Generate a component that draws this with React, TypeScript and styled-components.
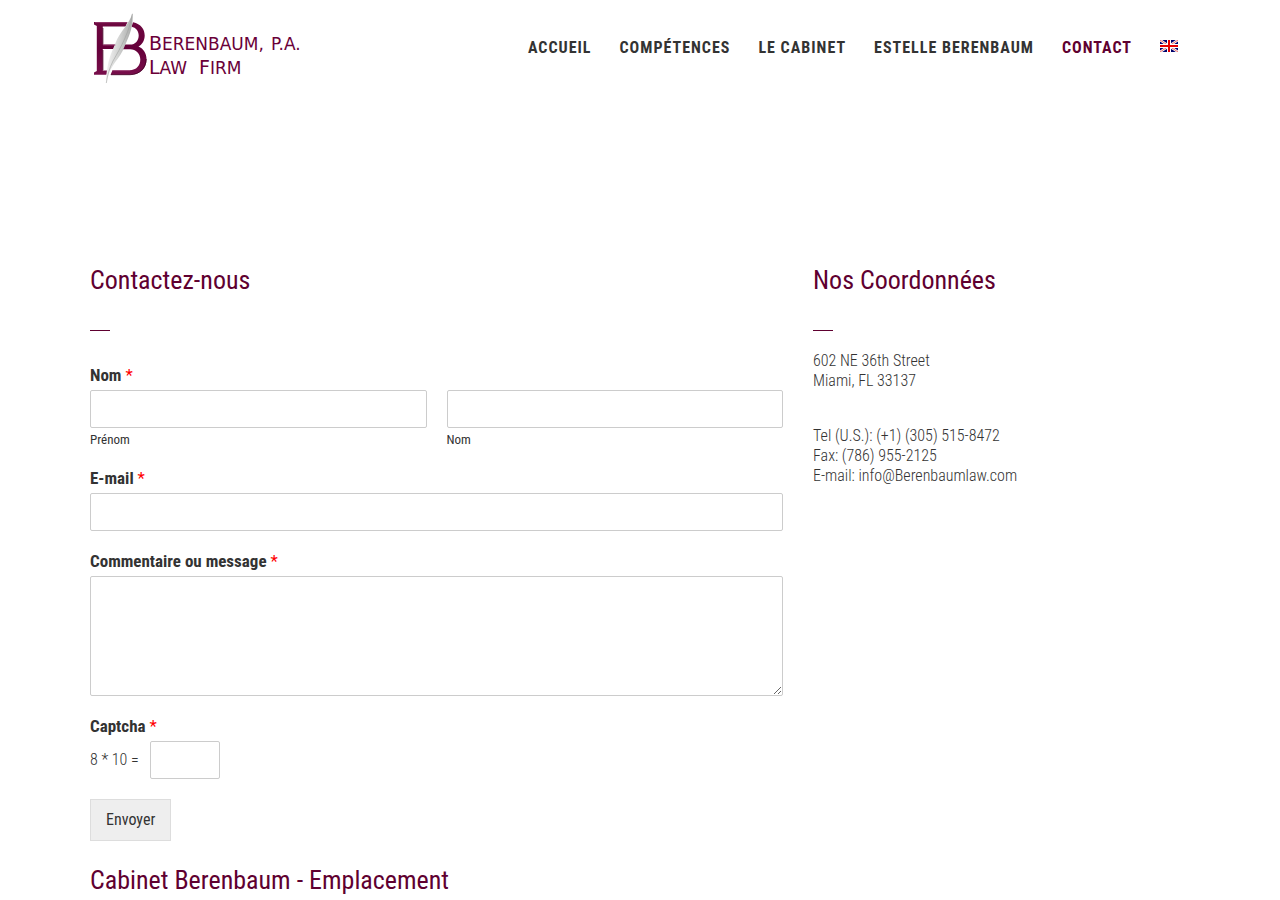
import React from "react";
import styled, { createGlobalStyle } from "styled-components";

const plum = "#5f0030";

const GlobalStyle = createGlobalStyle`
  *, *::before, *::after { box-sizing: border-box; }
  body {
    margin: 0;
    background: #fff;
    color: #333;
    font-family: "Roboto Condensed", Roboto, "Liberation Sans", sans-serif;
    font-size: 16px;
    line-height: 20px;
    font-weight: 300;
  }
`;

const Container = styled.div`
  max-width: 1140px;
  margin: 0 auto;
  padding: 0 20px;
`;

const Header = styled.header`
  display: flex;
  flex-wrap: wrap;
  align-items: center;
  justify-content: space-between;
  min-height: 95px;
  padding-right: 12px;
`;

const LogoLink = styled.a`
  display: block;
  line-height: 0;
`;

const Wordmark = styled.g`
  fill: #6a0038;
  font-family: "DejaVu Sans", sans-serif;
  font-size: 17px;
  font-weight: 400;
`;

const BigCap = styled.tspan`
  font-size: 19px;
`;

const Nav = styled.nav`
  display: flex;
  flex-wrap: wrap;
  align-items: center;
  gap: 8px 28px;
`;

const NavLink = styled.a<{ $active?: boolean }>`
  color: ${(p) => (p.$active ? plum : "#333")};
  font-size: 16px;
  font-weight: 700;
  letter-spacing: 1px;
  text-transform: uppercase;
  text-decoration: none;
`;

const FlagLink = styled.a`
  display: block;
  line-height: 0;
  padding-bottom: 3px;
`;

const Main = styled.main`
  padding: 170px 0 40px;
`;

const Columns = styled.div`
  display: grid;
  grid-template-columns: 693fr 377fr;
  gap: 30px;

  @media (max-width: 760px) {
    grid-template-columns: 1fr;
  }
`;

const Title = styled.h2`
  margin: 0;
  color: ${plum};
  font-size: 26px;
  line-height: 30px;
  font-weight: 400;
`;

const Rule = styled.hr`
  width: 20px;
  height: 1px;
  margin: 35px 0 0;
  border: 0;
  background: ${plum};
`;

const Form = styled.form`
  margin: 34px 0 24px;
`;

const Field = styled.div`
  margin-bottom: 20px;
`;

const Group = styled.fieldset`
  min-width: 0;
  margin: 0 0 20px;
  padding: 0;
  border: 0;
`;

const labelText = `
  display: block;
  margin-bottom: 5px;
  padding: 0;
  font-size: 17px;
  line-height: 20px;
  font-weight: 700;
`;

const Legend = styled.legend`${labelText}`;
const Label = styled.label`${labelText}`;

const Required = styled.span`
  color: #f00;
  font-weight: 400;
`;

const NameRow = styled.div`
  display: grid;
  grid-template-columns: 1fr 1fr;
  gap: 20px;
`;

const Input = styled.input`
  display: block;
  width: 100%;
  height: 38px;
  padding: 6px 10px;
  border: 1px solid #ccc;
  border-radius: 2px;
  background: #fff;
  color: #333;
  font: inherit;
`;

const CaptchaInput = styled(Input)`
  width: 70px;
`;

const TextArea = styled.textarea`
  display: block;
  width: 100%;
  height: 120px;
  padding: 6px 10px;
  border: 1px solid #ccc;
  border-radius: 2px;
  color: #333;
  font: inherit;
  resize: vertical;
`;

const SubLabel = styled.label`
  display: block;
  margin-top: 4px;
  font-size: 13px;
  line-height: 16px;
  font-weight: 400;
`;

const CaptchaRow = styled.div`
  display: flex;
  align-items: center;
  gap: 11px;
`;

const Submit = styled.button`
  display: block;
  padding: 10px 15px;
  border: 1px solid #ddd;
  background: #eee;
  color: #333;
  font: inherit;
  font-weight: 400;
  cursor: pointer;
`;

const Address = styled.address`
  margin-top: 20px;
  font-style: normal;
`;

const Lines = styled.p`
  margin: 0 0 35px;
`;

function Logo() {
  return (
    <svg width="212" height="80" viewBox="90 8 212 80" role="img" aria-label="Berenbaum, P.A. Law Firm">
      <defs>
        <linearGradient id="feather" x1="0" y1="0" x2="1" y2="0.3">
          <stop offset="0.2" stopColor="#f4f4f4" />
          <stop offset="0.6" stopColor="#cfd0cf" />
          <stop offset="1" stopColor="#a5a6a5" />
        </linearGradient>
        <linearGradient id="bevel" gradientUnits="userSpaceOnUse" x1="0" y1="22" x2="0" y2="75">
          <stop offset="0" stopColor="#6e0840" />
          <stop offset="0.5" stopColor="#65003a" />
          <stop offset="1" stopColor="#780e4b" />
        </linearGradient>
      </defs>
      <g fill="url(#bevel)">
        <path d="M94 22H127.500L125.500 26.500H102.800V44.500H116L113.500 49H102.800V70.500H108L106.500 74.800H94V72.500L96.800 71V26L94 24.500Z" />
        <path d="M133 22.200C141 24 144.700 29 144.700 35.500C144.700 40.500 142 44.500 138.500 46.500C143.500 48.500 146.500 53.500 146.500 59C146.500 68.500 140 74.800 130 74.800H110.500L112.500 70.200H129.500C136.500 70.200 140.300 65.500 140.300 59.500C140.300 53.500 136 49.200 130 49.200H122L124.500 44.600H130C135.500 44.600 138.700 40.500 138.700 35.500C138.700 31 136 27.500 131.500 26.700Z" />
      </g>
      <path d="M132.500 13C129.500 24 119.500 32 115.500 43C112.500 51 106.500 60 106 84C108 72 113 65 117.500 59C122 53 124 48 126 43C130 34 133.500 25 132.500 13Z" fill="url(#feather)" />
      <path d="M132.300 14C129.500 32 121 47 113 61C109.500 68 107.500 75 106.300 83" fill="none" stroke="#a0a1a0" strokeWidth="0.600" />
      <path d="M102.900 28V44.500M102.900 50V70M111 74.700H130C140 74.500 146 68 146.200 59" fill="none" stroke="#3f0022" strokeWidth="0.800" />
      <path d="M95 22.600H127M103 45H115.500M112.500 70.700H130" fill="none" stroke="#a04a7c" strokeWidth="0.700" />
      <Wordmark>
        <text x="149" y="50"><BigCap>B</BigCap>ERENBAUM,</text>
        <text x="271" y="50">P.A.</text>
        <text x="149" y="74"><BigCap>L</BigCap>AW</text>
        <text x="199" y="74"><BigCap>F</BigCap>IRM</text>
      </Wordmark>
    </svg>
  );
}

function Flag() {
  return (
    <svg width="18" height="12" viewBox="0 0 18 12" role="img" aria-label="English">
      <path fill="#00006b" d="M0 0h18v12H0z" />
      <path stroke="#fff" strokeWidth="2.400" d="M0 0l18 12M18 0L0 12" />
      <path stroke="#e8423f" strokeWidth="0.800" d="M0 0l18 12M18 0L0 12" />
      <path stroke="#fff" strokeWidth="4" d="M9 0v12M0 6h18" />
      <path stroke="#e60000" strokeWidth="2" d="M9 0v12M0 6h18" />
    </svg>
  );
}

const links = ["Accueil", "Compétences", "Le Cabinet", "Estelle Berenbaum", "Contact"];

export default function App() {
  return (
    <>
      <GlobalStyle />
      <Container>
        <Header>
          <LogoLink href="#"><Logo /></LogoLink>
          <Nav>
            {links.map((text) => (
              <NavLink key={text} href="#" $active={text === "Contact"}>{text}</NavLink>
            ))}
            <FlagLink href="#"><Flag /></FlagLink>
          </Nav>
        </Header>
        <Main>
          <Columns>
            <section>
              <Title>Contactez-nous</Title>
              <Rule />
              <Form onSubmit={(e) => e.preventDefault()}>
                <Group>
                  <Legend>Nom <Required>*</Required></Legend>
                  <NameRow>
                    <div>
                      <Input id="first" required />
                      <SubLabel htmlFor="first">Prénom</SubLabel>
                    </div>
                    <div>
                      <Input id="last" required />
                      <SubLabel htmlFor="last">Nom</SubLabel>
                    </div>
                  </NameRow>
                </Group>
                <Field>
                  <Label htmlFor="email">E-mail <Required>*</Required></Label>
                  <Input id="email" type="email" required />
                </Field>
                <Field>
                  <Label htmlFor="message">Commentaire ou message <Required>*</Required></Label>
                  <TextArea id="message" required />
                </Field>
                <Field>
                  <Label htmlFor="captcha">Captcha <Required>*</Required></Label>
                  <CaptchaRow>
                    <span>8 * 10 =</span>
                    <CaptchaInput id="captcha" required />
                  </CaptchaRow>
                </Field>
                <Submit type="submit">Envoyer</Submit>
              </Form>
              <Title>Cabinet Berenbaum - Emplacement</Title>
            </section>
            <section>
              <Title>Nos Coordonnées</Title>
              <Rule />
              <Address>
                <Lines>602 NE 36th Street<br />Miami, FL 33137</Lines>
                <Lines>
                  Tel (U.S.): (+1) (305) 515-8472<br />
                  Fax: (786) 955-2125<br />
                  E-mail: info@Berenbaumlaw.com
                </Lines>
              </Address>
            </section>
          </Columns>
        </Main>
      </Container>
    </>
  );
}
